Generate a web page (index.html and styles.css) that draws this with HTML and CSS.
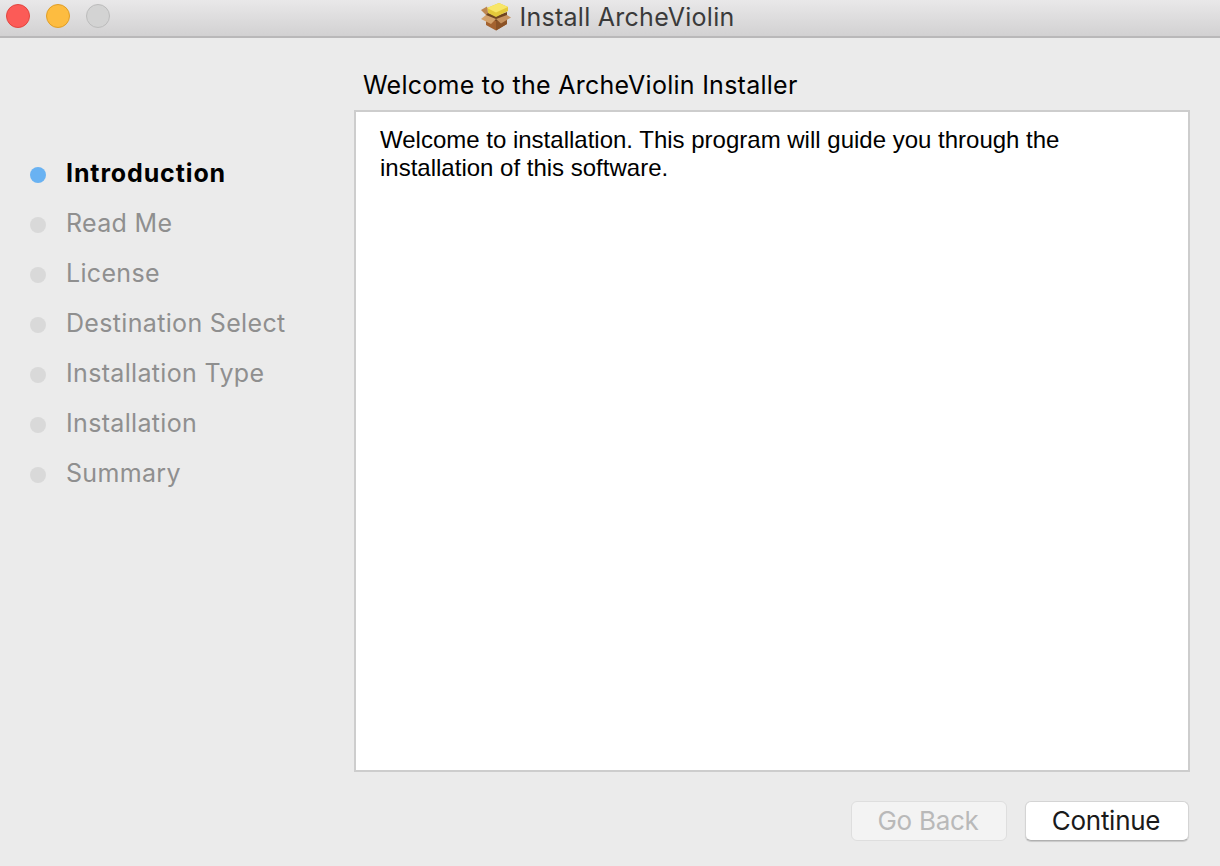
FILE: index.html
```html
<!DOCTYPE html>
<html lang="en">
<head>
<meta charset="utf-8">
<title>Install ArcheViolin</title>
<link rel="stylesheet" href="styles.css">
</head>
<body>
<div class="window">
  <header class="titlebar">
    <div class="lights">
      <span class="light red"></span>
      <span class="light yellow"></span>
      <span class="light gray"></span>
    </div>
    <div class="title">
      <svg class="pkg" width="32" height="29" viewBox="0 0 32 29">
        <path d="M6 13 L16 17 L27 13 L27 22 L16 28.5 L6 23 Z" fill="#a4622f"/>
        <path d="M16 17 L27 13 L27 22 L16 28.5 Z" fill="#8b5226"/>
        <path d="M6 10 L16 14 L27 10 L27 14 L16 19 L6 14 Z" fill="#6f4420"/>
        <path d="M7 6 L19 1 L28 5 L28 9 L16 15 L8 11 Z" fill="#e4c93b"/>
        <path d="M7 6 L19 1 L28 5 L16 10.5 Z" fill="#f8e667"/>
        <path d="M7 4.5 L1 8 L6 13 L8 11 Z" fill="#bd8650"/>
        <path d="M6 13 L1 17 L11 22 L16 17 Z" fill="#d3a26c"/>
        <path d="M27 13 L31 15.5 L21 21.5 L16 17 Z" fill="#c6925f"/>
      </svg>
      <span class="title-text">Install ArcheViolin</span>
    </div>
  </header>
  <div class="body">
    <nav class="steps">
      <div class="step active"><span class="dot"></span><span>Introduction</span></div>
      <div class="step"><span class="dot"></span><span>Read Me</span></div>
      <div class="step"><span class="dot"></span><span>License</span></div>
      <div class="step"><span class="dot"></span><span>Destination Select</span></div>
      <div class="step"><span class="dot"></span><span>Installation Type</span></div>
      <div class="step"><span class="dot"></span><span>Installation</span></div>
      <div class="step"><span class="dot"></span><span>Summary</span></div>
    </nav>
    <main class="main">
      <h1 class="heading">Welcome to the ArcheViolin Installer</h1>
      <div class="panel">Welcome to installation. This program will guide you through the installation of this software.</div>
      <div class="buttons">
        <button class="btn disabled" type="button">Go Back</button>
        <button class="btn primary" type="button">Continue</button>
      </div>
    </main>
  </div>
</div>
</body>
</html>
```
FILE: styles.css
```css
* { box-sizing: border-box; }
html, body { margin: 0; padding: 0; }
body { width: 1220px; height: 866px; overflow: hidden; background: #ebebeb; font-family: "Inter", "Liberation Sans", sans-serif; }
.window { display: flex; flex-direction: column; height: 866px; }
.titlebar {
  height: 38px; flex: none; position: relative; display: flex; align-items: center; justify-content: center;
  background: linear-gradient(#e9e8e9, #d2d1d2); border-bottom: 2px solid #b9b8b9;
}
.lights { position: absolute; left: 6px; top: 4px; display: flex; gap: 16px; }
.light { width: 24px; height: 24px; border-radius: 50%; border: 1px solid; }
.red { background: #fc5b57; border-color: #e2463f; }
.yellow { background: #fdbc40; border-color: #e09e27; }
.gray { background: #d3d3d3; border-color: #bcbcbc; }
.title { display: flex; align-items: center; gap: 7px; margin-top: -3px; margin-left: -5px; }
.pkg { display: block; }
.title-text { font-size: 25px; color: #3a3a3a; letter-spacing: 0.27px; font-weight: 400; }
.body { flex: 1; display: flex; min-height: 0; }
.steps { width: 354px; flex: none; padding-top: 110px; display: flex; flex-direction: column; }
.step { height: 50px; display: flex; align-items: center; gap: 20px; padding-left: 30px; font-size: 25px; letter-spacing: 0.33px; color: #8f8f8f; }
.dot { width: 16px; height: 16px; border-radius: 50%; background: #d9d9d9; flex: none; margin-top: 3px; }
.step.active { color: #000; font-weight: 700; letter-spacing: 0.88px; }
.step.active .dot { background: #69b2f2; }
.main { flex: 1; display: flex; flex-direction: column; padding-right: 30px; }
.heading { margin: 0; height: 72px; padding: 32px 0 0 9px; font-weight: 400; font-size: 25px; line-height: 30px; letter-spacing: 0.26px; color: #000; }
.panel {
  height: 662px; flex: none; background: #fff; border: 2px solid #cdcdcd; padding: 14px 24px;
  font-family: "Liberation Sans", Arial, sans-serif; font-size: 24px; line-height: 28px; color: #000;
}
.buttons { display: flex; justify-content: flex-end; gap: 18px; margin-top: 29px; margin-right: 1px; }
.btn { height: 40px; border-radius: 6px; font-family: inherit; font-size: 26px; letter-spacing: -0.27px; padding: 0 2px 2px 0; }
.btn.disabled { width: 156px; background: #f3f3f3; border: 1px solid #dedede; color: #b9b9b9; }
.btn.primary { width: 164px; background: #fff; border: 1px solid #d4d4d4; border-bottom-color: #b0b0b0; color: #1a1a1a; box-shadow: 0 1px 1px rgba(0,0,0,.15); }
```
